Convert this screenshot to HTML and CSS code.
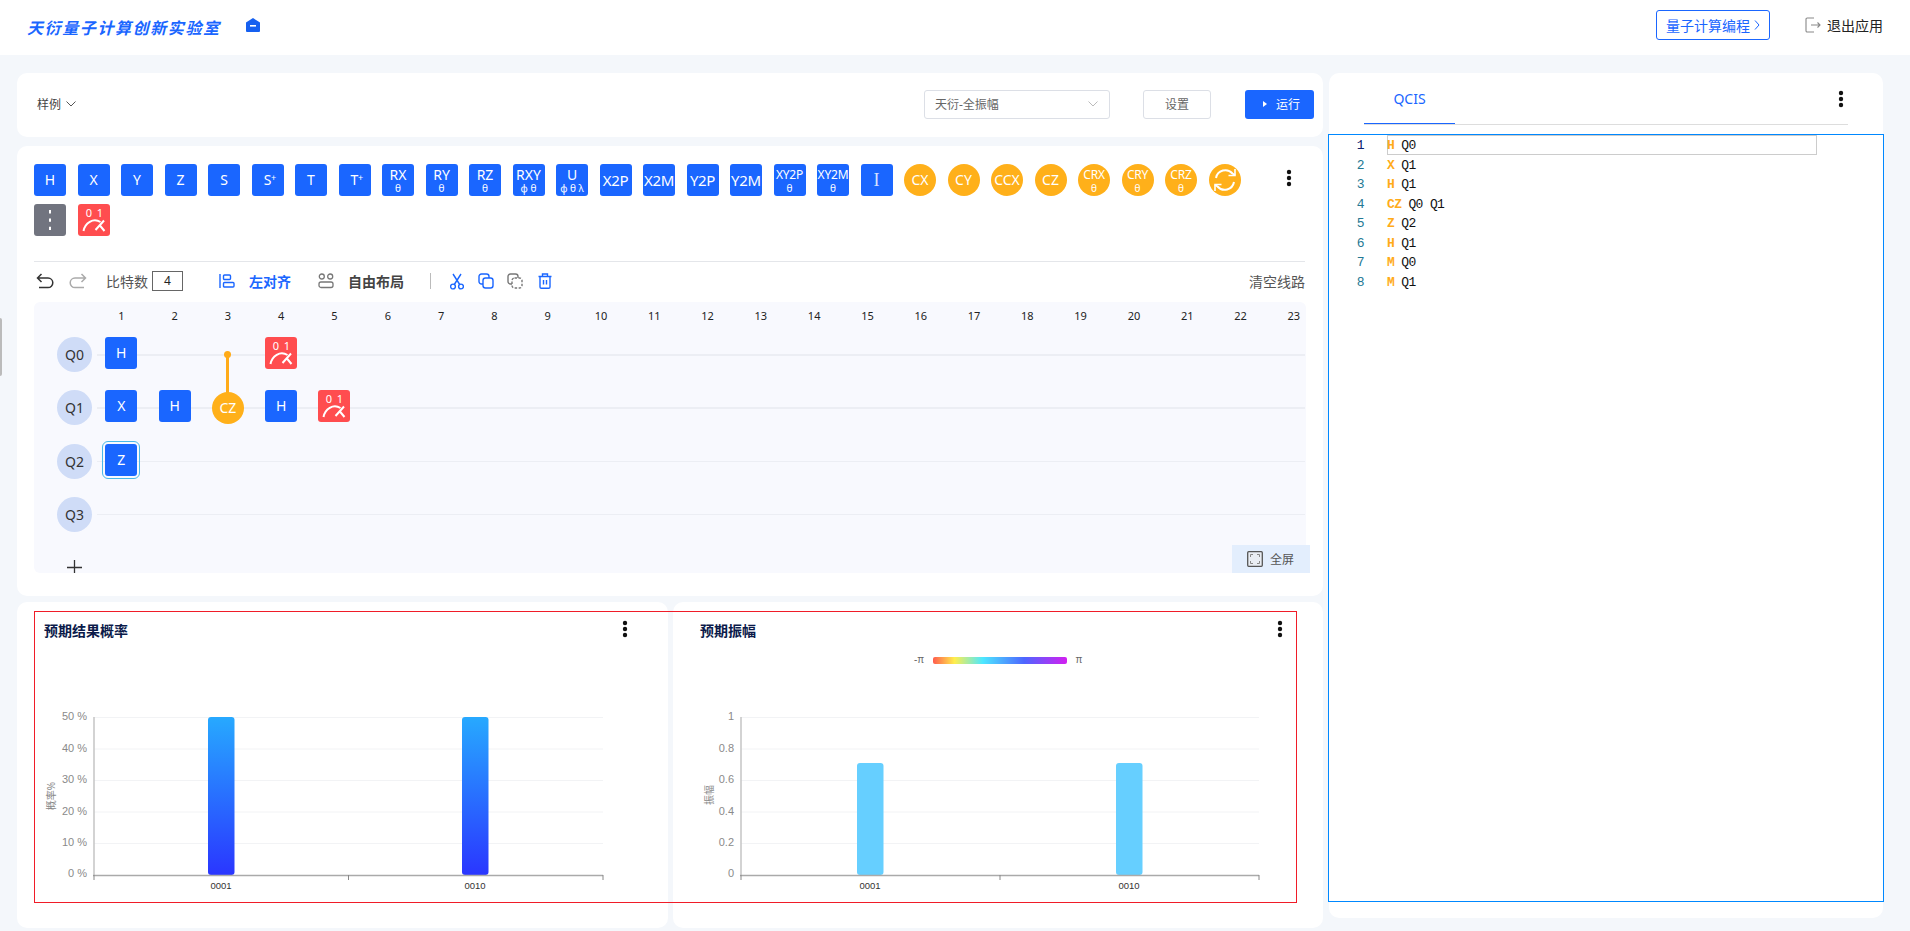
FILE: index.html
```html
<!DOCTYPE html>
<html lang="zh-CN">
<head>
    <meta charset="UTF-8">
    <title>天衍量子计算创新实验室</title>
    <link rel="stylesheet" href="styles.css">
</head>
<body>
    <header class="top-bar">
        <h1 class="brand">天衍量子计算创新实验室</h1>
        <svg class="brand-mark" width="14" height="14" viewBox="0 0 14 14"><path d="M0 4.5 7 0l7 4.5V13a1 1 0 0 1-1 1H1a1 1 0 0 1-1-1z" fill="#1660f0"/><rect x="4" y="7" width="6" height="1.6" fill="#fff"/></svg>
        <a class="course-btn">量子计算编程<svg width="6" height="12" viewBox="0 0 6 12"><path d="M1 1.5 5 6 1 10.5" fill="none" stroke="#1a66ff"/></svg></a>
        <a class="exit-btn">
            <svg width="16" height="16" viewBox="0 0 16 16"><path d="M9 1H2.2A1.2 1.2 0 0 0 1 2.2v11.6A1.2 1.2 0 0 0 2.2 15H9M6 8h9M12.5 5.5 15 8l-2.5 2.5" fill="none" stroke="#888" stroke-width="1.1"/></svg>
            退出应用
        </a>
    </header>

    <div class="side-handle"></div>

    <main class="workspace">
        <div class="left-col">
            <section class="panel run-bar">
                <span class="sample">样例<svg width="10" height="6" viewBox="0 0 10 6"><path d="M.5.5 5 5 9.500.5" fill="none" stroke="#555"/></svg></span>
                <div class="select">天衍-全振幅<svg width="10" height="6" viewBox="0 0 10 6"><path d="M.5.5 5 5 9.500.5" fill="none" stroke="#bbb"/></svg></div>
                <button class="btn-plain">设置</button>
                <button class="btn-run"><i class="play"></i>运行</button>
            </section>

            <section class="panel editor-panel">
                <div class="gate-bar">
                    <div class="gate-list">
                        <div class="gate">H</div>
                        <div class="gate">X</div>
                        <div class="gate">Y</div>
                        <div class="gate">Z</div>
                        <div class="gate">S</div>
                        <div class="gate">S<sup>+</sup></div>
                        <div class="gate">T</div>
                        <div class="gate">T<sup>+</sup></div>
                        <div class="gate"><b>RX</b><small>θ</small></div>
                        <div class="gate"><b>RY</b><small>θ</small></div>
                        <div class="gate"><b>RZ</b><small>θ</small></div>
                        <div class="gate"><b>RXY</b><small>φ θ</small></div>
                        <div class="gate"><b>U</b><small>φ θ λ</small></div>
                        <div class="gate wide">X2P</div>
                        <div class="gate wide">X2M</div>
                        <div class="gate wide">Y2P</div>
                        <div class="gate wide">Y2M</div>
                        <div class="gate tiny"><b>XY2P</b><small>θ</small></div>
                        <div class="gate tiny"><b>XY2M</b><small>θ</small></div>
                        <div class="gate id-gate">I</div>
                        <div class="gate ctrl-gate">CX</div>
                        <div class="gate ctrl-gate">CY</div>
                        <div class="gate ctrl-gate">CCX</div>
                        <div class="gate ctrl-gate">CZ</div>
                        <div class="gate ctrl-gate tiny"><b>CRX</b><small>θ</small></div>
                        <div class="gate ctrl-gate tiny"><b>CRY</b><small>θ</small></div>
                        <div class="gate ctrl-gate tiny"><b>CRZ</b><small>θ</small></div>
                        <div class="gate ctrl-gate">
                            <svg width="32" height="32" viewBox="0 0 32 32" fill="none" stroke="#fff" stroke-width="2"><path d="M7 14a9.500 9.500 0 0 1 16.500-4.500L26 11"/><path d="M26 5v6.500h-6.500" stroke-width="1.600"/><path d="M25 18a9.500 9.500 0 0 1-16.500 4.500L6 21"/><path d="M6 27v-6.500h6.500" stroke-width="1.600"/></svg>
                        </div>
                        <div class="gate barrier-gate">
                            <svg width="32" height="32" viewBox="0 0 32 32"><path d="M16 6v20" stroke="#fff" stroke-width="2" stroke-dasharray="3.400 5"/></svg>
                        </div>
                        <div class="gate measure-gate">
                            <svg width="32" height="32" viewBox="0 0 32 32" fill="none" stroke="#fff" stroke-width="2"><text x="11" y="12.500" class="meas-text">0</text><text x="22" y="12.500" class="meas-text">1</text><path d="M5.500 27C7 19 15 13.500 22.500 18"/><path d="M17.500 26 26 16.500M21.500 21 26.500 27"/></svg>
                        </div>
                    </div>
                    <svg class="dots gate-dots" width="6" height="18" viewBox="0 0 6 18"><circle cx="3" cy="3" r="2.200"/><circle cx="3" cy="9" r="2.200"/><circle cx="3" cy="15" r="2.200"/></svg>
                </div>

                <div class="toolbar">
                    <svg class="t-undo" width="18" height="16" viewBox="0 0 18 16" fill="none" stroke="#333" stroke-width="1.500"><path d="M5.500 1 1.500 5l4 4M1.500 5H12a4.800 4.800 0 0 1 0 9.600H3"/></svg>
                    <svg class="t-redo" width="18" height="16" viewBox="0 0 18 16" fill="none" stroke="#aaa" stroke-width="1.500"><path d="M12.500 1l4 4-4 4M16.500 5H6a4.800 4.800 0 0 0 0 9.600h9"/></svg>
                    <span class="t-label">比特数</span>
                    <div class="qubit-input">4</div>
                    <svg class="t-align" width="16" height="16" viewBox="0 0 16 16" fill="none" stroke="#1a66ff" stroke-width="1.400"><path d="M1 1v14"/><rect x="4.500" y="2" width="7" height="4.500" rx="1"/><rect x="4.500" y="9.500" width="10.500" height="4.500" rx="1"/></svg>
                    <span class="t-active">左对齐</span>
                    <svg class="t-free" width="16" height="16" viewBox="0 0 16 16" fill="none" stroke="#777" stroke-width="1.300"><circle cx="3.800" cy="3.500" r="2.500"/><circle cx="12.200" cy="3.500" r="2.500"/><rect x="1" y="9" width="14" height="5.500" rx="2"/></svg>
                    <span class="t-strong">自由布局</span>
                    <i class="t-divider"></i>
                    <svg class="t-cut" width="14" height="17" viewBox="0 0 14 17" fill="none" stroke="#1a66ff" stroke-width="1.400"><circle cx="3" cy="13.500" r="2.400"/><circle cx="11" cy="13.500" r="2.400"/><path d="M4.300 11.500 11 1M9.700 11.500 3 1"/></svg>
                    <svg class="t-copy" width="16" height="16" viewBox="0 0 16 16" fill="none" stroke="#1a66ff" stroke-width="1.400"><rect x="1" y="1" width="10" height="10" rx="2.500"/><rect x="5" y="5" width="10" height="10" rx="2.500" fill="#fff"/></svg>
                    <svg class="t-paste" width="16" height="16" viewBox="0 0 16 16" fill="none" stroke="#777" stroke-width="1.400"><rect x="1" y="1" width="10" height="10" rx="2.500"/><rect x="5" y="5" width="10" height="10" rx="2.500" fill="#fff" stroke-dasharray="2.500 1.500"/></svg>
                    <svg class="t-trash" width="14" height="16" viewBox="0 0 14 16" fill="none" stroke="#1a66ff" stroke-width="1.400"><path d="M.5 3.500h13M4.500 3.500V1h5v2.500M2 3.500V14a1.300 1.300 0 0 0 1.300 1.300h7.400A1.300 1.300 0 0 0 12 14V3.500M5.500 7v4.500M8.500 7v4.500"/></svg>
                    <span class="t-clear">清空线路</span>
                </div>

                <div class="circuit">
                    <div class="col-head">
                        <span>1</span><span>2</span><span>3</span><span>4</span><span>5</span><span>6</span><span>7</span><span>8</span>
                        <span>9</span><span>10</span><span>11</span><span>12</span><span>13</span><span>14</span><span>15</span><span>16</span>
                        <span>17</span><span>18</span><span>19</span><span>20</span><span>21</span><span>22</span><span>23</span>
                    </div>
                    <div class="qrow">
                        <div class="qubit">Q0</div>
                        <div class="cell"><div class="gate">H</div></div>
                        <div class="cell"></div>
                        <div class="cell"><i class="ctrl-dot"></i><i class="ctrl-line"></i></div>
                        <div class="cell">
                            <div class="gate measure-gate">
                                <svg width="32" height="32" viewBox="0 0 32 32" fill="none" stroke="#fff" stroke-width="2"><text x="11" y="12.500" class="meas-text">0</text><text x="22" y="12.500" class="meas-text">1</text><path d="M5.500 27C7 19 15 13.500 22.500 18"/><path d="M17.500 26 26 16.500M21.500 21 26.500 27"/></svg>
                            </div>
                        </div>
                    </div>
                    <div class="qrow">
                        <div class="qubit">Q1</div>
                        <div class="cell"><div class="gate">X</div></div>
                        <div class="cell"><div class="gate">H</div></div>
                        <div class="cell"><div class="gate ctrl-gate placed">CZ</div></div>
                        <div class="cell"><div class="gate">H</div></div>
                        <div class="cell">
                            <div class="gate measure-gate">
                                <svg width="32" height="32" viewBox="0 0 32 32" fill="none" stroke="#fff" stroke-width="2"><text x="11" y="12.500" class="meas-text">0</text><text x="22" y="12.500" class="meas-text">1</text><path d="M5.500 27C7 19 15 13.500 22.500 18"/><path d="M17.500 26 26 16.500M21.500 21 26.500 27"/></svg>
                            </div>
                        </div>
                    </div>
                    <div class="qrow">
                        <div class="qubit">Q2</div>
                        <div class="cell"><div class="gate selected">Z</div></div>
                    </div>
                    <div class="qrow">
                        <div class="qubit">Q3</div>
                    </div>
                    <svg class="add-qubit" width="15" height="15" viewBox="0 0 15 15"><path d="M7.500 0v15M0 7.500h15" stroke="#333" stroke-width="1.300"/></svg>
                </div>

                <div class="fullscreen">
                    <svg width="16" height="16" viewBox="0 0 16 16" fill="none"><rect x=".7" y=".7" width="14.600" height="14.600" rx="1" fill="#e9edf3" stroke="#555" stroke-width="1.300"/><path d="M3.500 6V3.500H6M10 3.500h2.500V6M12.500 10v2.500H10M6 12.500H3.500V10" stroke="#888"/></svg>
                    全屏
                </div>
            </section>

            <div class="result-row">
                <section class="panel chart-panel">
                    <div class="chart-head">
                        <h2>预期结果概率</h2>
                        <svg class="dots" width="6" height="18" viewBox="0 0 6 18"><circle cx="3" cy="3" r="2.200"/><circle cx="3" cy="9" r="2.200"/><circle cx="3" cy="15" r="2.200"/></svg>
                    </div>
                    <svg class="chart" width="651" height="270" viewBox="0 0 651 270">
                        <defs>
                            <linearGradient id="probBar" x1="0" y1="0" x2="0" y2="1">
                                <stop offset="0" stop-color="#27a9ff"/>
                                <stop offset="1" stop-color="#2a36ff"/>
                            </linearGradient>
                        </defs>
                        <path class="grid" d="M77 72.500H586M77 104H586M77 135.500H586M77 167H586M77 198.500H586"/>
                        <rect x="191" y="72" width="26.500" height="158" rx="3" fill="url(#probBar)"/>
                        <rect x="445" y="72" width="26.500" height="158" rx="3" fill="url(#probBar)"/>
                        <path class="y-axis" d="M77 72V230"/>
                        <path class="x-axis" d="M76 230.500H586"/>
                        <path class="x-tick" d="M77 230v5M331.500 230v5M586 230v5"/>
                        <g class="y-label">
                            <text x="70" y="75">50 %</text>
                            <text x="70" y="107">40 %</text>
                            <text x="70" y="138">30 %</text>
                            <text x="70" y="170">20 %</text>
                            <text x="70" y="201">10 %</text>
                            <text x="70" y="232">0 %</text>
                        </g>
                        <text class="x-label" x="204" y="244">0001</text>
                        <text class="x-label" x="458" y="244">0010</text>
                        <text class="y-title" transform="translate(38 151) rotate(-90)">概率%</text>
                    </svg>
                </section>

                <section class="panel chart-panel">
                    <div class="chart-head">
                        <h2>预期振幅</h2>
                        <svg class="dots" width="6" height="18" viewBox="0 0 6 18"><circle cx="3" cy="3" r="2.200"/><circle cx="3" cy="9" r="2.200"/><circle cx="3" cy="15" r="2.200"/></svg>
                    </div>
                    <svg class="chart" width="650" height="270" viewBox="0 0 650 270">
                        <defs>
                            <linearGradient id="phase" x1="0" y1="0" x2="1" y2="0">
                                <stop offset="0" stop-color="#ff5c4d"/>
                                <stop offset=".16" stop-color="#ffee4d"/>
                                <stop offset=".37" stop-color="#4de8ff"/>
                                <stop offset=".68" stop-color="#4d66ff"/>
                                <stop offset="1" stop-color="#d31ff0"/>
                            </linearGradient>
                        </defs>
                        <text class="legend" x="246" y="18">-π</text>
                        <rect x="260" y="12" width="134" height="7" rx="2" fill="url(#phase)"/>
                        <text class="legend" x="406" y="18">π</text>
                        <path class="grid" d="M68 72.500H586M68 104H586M68 135.500H586M68 167H586M68 198.500H586"/>
                        <rect x="184" y="118" width="26.500" height="112" rx="3" fill="#66cfff"/>
                        <rect x="443" y="118" width="26.500" height="112" rx="3" fill="#66cfff"/>
                        <path class="y-axis" d="M68 72V230"/>
                        <path class="x-axis" d="M67 230.500H586"/>
                        <path class="x-tick" d="M68 230v5M327 230v5M586 230v5"/>
                        <g class="y-label">
                            <text x="61" y="75">1</text>
                            <text x="61" y="107">0.8</text>
                            <text x="61" y="138">0.6</text>
                            <text x="61" y="170">0.4</text>
                            <text x="61" y="201">0.2</text>
                            <text x="61" y="232">0</text>
                        </g>
                        <text class="x-label" x="197" y="244">0001</text>
                        <text class="x-label" x="456" y="244">0010</text>
                        <text class="y-title" transform="translate(40 150) rotate(-90)">振幅</text>
                    </svg>
                </section>
                <div class="focus-frame"></div>
            </div>
        </div>

        <aside class="panel code-panel">
            <div class="tabs">
                <div class="tab">QCIS</div>
                <svg class="dots" width="6" height="18" viewBox="0 0 6 18"><circle cx="3" cy="3" r="2.200"/><circle cx="3" cy="9" r="2.200"/><circle cx="3" cy="15" r="2.200"/></svg>
            </div>
            <div class="code-box">
                <div class="line current"><span class="ln">1</span><span class="code"><b>H</b> Q0</span></div>
                <div class="line"><span class="ln">2</span><span class="code"><b>X</b> Q1</span></div>
                <div class="line"><span class="ln">3</span><span class="code"><b>H</b> Q1</span></div>
                <div class="line"><span class="ln">4</span><span class="code"><b>CZ</b> Q0 Q1</span></div>
                <div class="line"><span class="ln">5</span><span class="code"><b>Z</b> Q2</span></div>
                <div class="line"><span class="ln">6</span><span class="code"><b>H</b> Q1</span></div>
                <div class="line"><span class="ln">7</span><span class="code"><b>M</b> Q0</span></div>
                <div class="line"><span class="ln">8</span><span class="code"><b>M</b> Q1</span></div>
            </div>
        </aside>
    </main>
</body>
</html>
```

FILE: styles.css
```css
* {
    box-sizing: border-box;
}
html, body {
    height: 100%;
}
body {
    margin: 0;
    overflow: hidden;
    background: #f4f7fb;
    color: #333;
    font-family: "Noto Sans", "Noto Sans CJK SC", sans-serif;
    font-size: 14px;
}
h1, h2 {
    margin: 0;
}

/* top bar */
.top-bar {
    height: 55px;
    background: white;
    display: flex;
    align-items: center;
    padding-left: 27px;
}
.brand {
    font-size: 16px;
    font-style: italic;
    font-weight: 700;
    letter-spacing: 1.6px;
    color: #1a66ff;
    line-height: 20px;
}
.brand-mark {
    margin-left: 25px;
    margin-top: -5px;
}
.course-btn {
    margin-left: auto;
    margin-top: -5px;
    width: 114px;
    height: 30px;
    border: 1px solid #1a66ff;
    border-radius: 3px;
    color: #1a66ff;
    display: flex;
    align-items: center;
    gap: 4px;
    padding-left: 9px;
    white-space: nowrap;
}
.exit-btn {
    margin-left: 35px;
    margin-right: 27px;
    margin-top: -5px;
    display: flex;
    align-items: center;
    gap: 6px;
    color: #222;
}
.side-handle {
    position: absolute;
    left: 0;
    top: 318px;
    width: 2px;
    height: 58px;
    background: #bbb;
    border-radius: 0 2px 2px 0;
}

/* layout */
.workspace {
    display: flex;
    padding: 18px 0 0 17px;
}
.left-col {
    width: 1306px;
    display: flex;
    flex-direction: column;
}
.panel {
    background: white;
    border-radius: 10px;
}

/* run bar */
.run-bar {
    height: 64px;
    display: flex;
    align-items: center;
    padding: 0 9px 2px 20px;
    font-size: 12px;
}
.sample {
    display: flex;
    align-items: center;
    gap: 5px;
    color: #444;
}
.select {
    margin-left: auto;
    width: 186px;
    height: 29px;
    border: 1px solid #dcdfe6;
    border-radius: 3px;
    display: flex;
    align-items: center;
    justify-content: space-between;
    padding: 0 11px 0 10px;
    color: #666;
}
.btn-plain {
    margin-left: 33px;
    width: 68px;
    height: 29px;
    background: white;
    border: 1px solid #dcdfe6;
    border-radius: 3px;
    color: #666;
    font: inherit;
}
.btn-run {
    margin-left: 34px;
    width: 69px;
    height: 29px;
    background: #1a66ff;
    border: none;
    border-radius: 3px;
    color: white;
    font: inherit;
    display: flex;
    align-items: center;
    padding-left: 18px;
}
.play {
    width: 0;
    height: 0;
    border-left: 4px solid white;
    border-top: 3.500px solid transparent;
    border-bottom: 3.500px solid transparent;
    margin-right: 9px;
}

/* gates */
.editor-panel {
    position: relative;
    height: 450px;
    margin-top: 9px;
    padding: 18px 17px 22px;
}
.gate-bar {
    display: flex;
    align-items: flex-start;
    height: 98px;
    border-bottom: 1px solid #e4e6ea;
    width: 1271px;
}
.gate-list {
    width: 1230px;
    display: flex;
    flex-wrap: wrap;
    gap: 8px 11.500px;
}
.gate {
    width: 32px;
    height: 32px;
    background: #1a66ff;
    border-radius: 3px;
    color: white;
    font-size: 14px;
    line-height: 16px;
    display: flex;
    flex-direction: column;
    align-items: center;
    justify-content: center;
    white-space: nowrap;
}
.gate b {
    font-weight: 400;
    line-height: 16px;
}
.gate small {
    font-size: 10px;
    line-height: 10px;
}
.gate sup {
    position: absolute;
    font-size: 9px;
    line-height: 9px;
    margin: -5px 0 0 12px;
}
.gate.wide {
    font-size: 15px;
    letter-spacing: -.3px;
}
.gate.tiny b {
    font-size: 12px;
    letter-spacing: -.2px;
}
.id-gate {
    font-family: "Liberation Serif", serif;
    font-size: 18px;
    color: #d5e2ff;
}
.ctrl-gate {
    background: #ffb01a;
    border-radius: 50%;
}
.barrier-gate {
    background: #71747f;
}
.measure-gate {
    background: #ff4d4f;
}
.meas-text {
    fill: white;
    stroke: none;
    font-size: 11px;
    text-anchor: middle;
}
.dots {
    fill: #111;
}
.gate-dots {
    margin-left: 22px;
    margin-top: 5px;
}

/* toolbar */
.toolbar {
    height: 40px;
    width: 1271px;
    padding-bottom: 2px;
    display: flex;
    align-items: center;
    color: #555;
}
.t-undo { margin-left: 2px; }
.t-redo { margin-left: 15px; }
.t-label { margin-left: 19px; }
.qubit-input {
    margin-left: 4px;
    width: 31px;
    height: 20px;
    border: 1px solid #666;
    color: #222;
    font-size: 12px;
    line-height: 18px;
    text-align: center;
}
.t-align { margin-left: 36px; }
.t-active {
    margin-left: 14px;
    color: #1a66ff;
    font-weight: 700;
}
.t-free { margin-left: 27px; }
.t-strong {
    margin-left: 14px;
    color: #444;
    font-weight: 700;
}
.t-divider {
    margin-left: 26px;
    width: 1px;
    height: 16px;
    background: #bbb;
}
.t-cut { margin-left: 19px; }
.t-copy { margin-left: 14px; }
.t-paste { margin-left: 13px; }
.t-trash { margin-left: 15px; }
.t-clear { margin-left: auto; }

/* circuit */
.circuit {
    height: 271px;
    background: #f8f9fe;
    border-radius: 6px;
    overflow: hidden;
}
.col-head {
    height: 26px;
    padding-left: 60.650px;
    display: flex;
    padding-top: 5px;
    font-size: 11px;
    line-height: 18px;
    color: #222;
}
.col-head span {
    flex: 0 0 53.300px;
    text-align: center;
}
.qrow {
    position: relative;
    height: 53.300px;
    display: flex;
    align-items: center;
    padding-left: 23px;
}
.qrow::before {
    content: "";
    position: absolute;
    left: 63px;
    right: 1px;
    top: 26px;
    height: 1.500px;
    background: #eceef4;
}
.qubit {
    position: relative;
    width: 35px;
    height: 35px;
    margin-right: 2.650px;
    border-radius: 50%;
    background: #cfdcf7;
    text-align: center;
    line-height: 35px;
}
.cell {
    position: relative;
    flex: 0 0 53.300px;
    height: 100%;
    display: flex;
    align-items: center;
    justify-content: center;
}
.cell .gate {
    position: relative;
    margin-bottom: 3px;
}
.cell .gate.placed {
    margin-bottom: 0;
}
.cell .gate.selected {
    outline: 1px solid #4ab8e8;
    outline-offset: 2px;
}
.ctrl-dot {
    position: absolute;
    left: 23.150px;
    top: 23px;
    width: 7px;
    height: 7px;
    border-radius: 50%;
    background: #ffab19;
}
.ctrl-line {
    position: absolute;
    left: 25.150px;
    top: 26px;
    width: 3px;
    height: 40px;
    background: #ffab19;
}
.add-qubit {
    display: block;
    margin: 19px 0 0 33px;
}
.fullscreen {
    position: absolute;
    left: 1215px;
    top: 399px;
    width: 78px;
    height: 28px;
    background: #e3eefd;
    display: flex;
    align-items: center;
    gap: 7px;
    padding-left: 15px;
    font-size: 12px;
    color: #555;
}

/* charts */
.result-row {
    position: relative;
    display: flex;
    gap: 5px;
    margin-top: 6px;
}
.chart-panel {
    flex: 1;
    height: 326px;
}
.chart-head {
    height: 43px;
    display: flex;
    justify-content: space-between;
    padding: 19px 40px 0 27px;
}
.chart-head h2 {
    font-size: 14px;
    font-weight: 700;
    line-height: 20px;
    color: #0b1a4a;
}
.chart-head .dots {
    margin-top: -1px;
}
.chart {
    display: block;
}
.grid {
    stroke: #f2f3f5;
    fill: none;
}
.y-axis {
    stroke: #c4c4c4;
    stroke-width: 1.500;
}
.x-axis {
    stroke: #aaa;
    stroke-width: 1.500;
}
.x-tick {
    stroke: #888;
}
.y-label text {
    font-family: "Liberation Sans", sans-serif;
    font-size: 11px;
    fill: #8a8a8a;
    text-anchor: end;
}
.x-label {
    font-family: "Liberation Sans", sans-serif;
    font-size: 9.500px;
    fill: #333;
    text-anchor: middle;
}
.y-title {
    font-size: 10px;
    fill: #888;
    text-anchor: middle;
}
.legend {
    font-family: "Liberation Sans", sans-serif;
    font-size: 10px;
    fill: #666;
    text-anchor: middle;
}
.focus-frame {
    position: absolute;
    left: 17px;
    top: 9px;
    width: 1263px;
    height: 292px;
    border: 1px solid #f01c28;
    pointer-events: none;
}

/* code panel */
.code-panel {
    margin-left: 6px;
    width: 554px;
    height: 845px;
}
.tabs {
    position: relative;
    height: 52px;
    margin: 0 35px 9px;
    border-bottom: 1.500px solid #ddd;
    display: flex;
    justify-content: space-between;
}
.tab {
    width: 91px;
    height: 50.500px;
    border-bottom: 1.500px solid #1a66ff;
    color: #1a66ff;
    line-height: 52px;
    text-align: center;
}
.tabs .dots {
    margin: 17px 4px 0 0;
}
.code-box {
    width: 556px;
    height: 768px;
    margin-left: -1px;
    border: 1px solid #0088ff;
    font-family: "Liberation Mono", monospace;
    font-size: 13px;
    letter-spacing: -.65px;
    color: #111;
    background: white;
}
.line {
    display: flex;
    height: 19.500px;
    line-height: 22px;
    white-space: pre;
}
.ln {
    width: 35px;
    text-align: right;
    color: #237893;
}
.line.current .ln {
    color: #0b216f;
}
.code {
    margin-left: 23px;
    width: 430px;
}
.code b {
    color: #ffab19;
}
.line.current .code {
    box-shadow: inset 0 0 0 1px #ccc;
}
```
